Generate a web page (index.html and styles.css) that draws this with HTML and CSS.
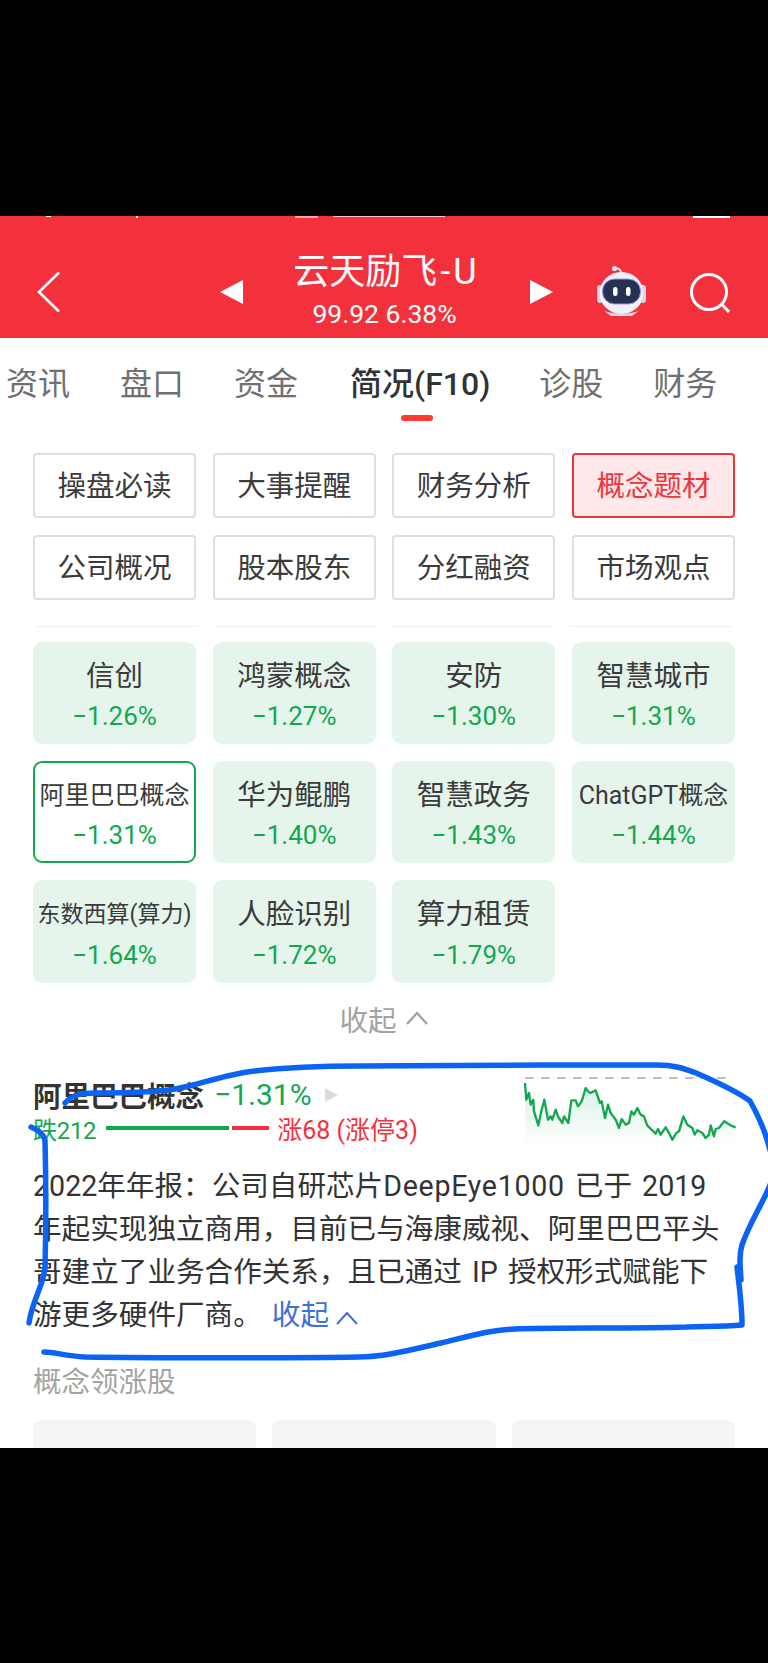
FILE: index.html
```html
<!DOCTYPE html>
<html lang="zh-CN">
<head>
    <meta charset="UTF-8">
    <meta name="viewport" content="width=device-width, initial-scale=1.0">
    <title>云天励飞-U</title>
    <link rel="stylesheet" href="styles.css">
</head>
<body>
    <div class="bar-black"></div>

    <div class="app">
        <header class="quote-header">
            <svg class="status-rest" width="768" height="4" viewBox="0 0 768 4">
                <rect x="46" y="0" width="5" height="1" fill="#fff"/>
                <rect x="136" y="0" width="2" height="2" fill="#fff"/>
                <rect x="295" y="0" width="23" height="2" rx="1" fill="#f9a9ae"/>
                <rect x="333" y="0" width="112" height="1" fill="#fbc4c7"/>
                <rect x="693" y="0" width="37" height="2" fill="#fff"/>
            </svg>
            <button class="icon-btn back-btn">
                <svg width="24" height="42" viewBox="0 0 24 42"><path d="M22 1.5 2 21l20 19.500" fill="none" stroke="#fff" stroke-width="2.600"/></svg>
            </button>
            <div class="stock-switch">
                <span class="arrow arrow-left"></span>
                <div class="stock-title">
                    <div class="stock-name">云天励飞<span class="stock-suffix">-U</span></div>
                    <div class="stock-price">99.92 6.38%</div>
                </div>
                <span class="arrow arrow-right"></span>
            </div>
            <div class="header-right">
                <svg class="robot" width="50" height="50" viewBox="0 0 50 50">
                    <path d="M25 9C24 4 23 3 19 2" fill="none" stroke="#e6e3f4" stroke-width="2"/>
                    <circle cx="17.500" cy="2.500" r="2.500" fill="#f1eff9"/>
                    <rect x="0" y="19" width="6" height="18" rx="3" fill="#d5d3e6"/>
                    <rect x="43" y="19" width="6" height="18" rx="3" fill="#d5d3e6"/>
                    <ellipse cx="24.500" cy="27" rx="22" ry="21" fill="#f2f1fa"/>
                    <path d="M6 44c8 5 29 5 37 0l-8 6H14z" fill="#dcdaec"/>
                    <rect x="5.500" y="13" width="38" height="25" rx="12" fill="#26304f" stroke="#a98fe6" stroke-width="1"/>
                    <rect x="16" y="21" width="4.500" height="9" rx="2.200" fill="#fff"/>
                    <rect x="29" y="21" width="4.500" height="9" rx="2.200" fill="#fff"/>
                </svg>
                <svg class="search" width="42" height="42" viewBox="0 0 42 42">
                    <circle cx="20" cy="20" r="17.500" fill="none" stroke="#fff" stroke-width="3"/>
                    <path d="M33 32.500 40 40" fill="none" stroke="#fff" stroke-width="3"/>
                </svg>
            </div>
        </header>

        <nav class="tabs">
            <span>资讯</span>
            <span>盘口</span>
            <span>资金</span>
            <span class="active">简况(F10)</span>
            <span>诊股</span>
            <span>财务</span>
        </nav>

        <div class="menu-grid">
            <a class="menu-item">操盘必读</a>
            <a class="menu-item">大事提醒</a>
            <a class="menu-item">财务分析</a>
            <a class="menu-item selected">概念题材</a>
            <a class="menu-item">公司概况</a>
            <a class="menu-item">股本股东</a>
            <a class="menu-item">分红融资</a>
            <a class="menu-item">市场观点</a>
        </div>

        <div class="peek-row">
            <i></i><i></i><i></i><i></i>
        </div>

        <div class="concept-grid">
            <div class="concept"><div class="concept-name">信创</div><div class="concept-pct">−1.26%</div></div>
            <div class="concept"><div class="concept-name">鸿蒙概念</div><div class="concept-pct">−1.27%</div></div>
            <div class="concept"><div class="concept-name">安防</div><div class="concept-pct">−1.30%</div></div>
            <div class="concept"><div class="concept-name">智慧城市</div><div class="concept-pct">−1.31%</div></div>
            <div class="concept current"><div class="concept-name small">阿里巴巴概念</div><div class="concept-pct">−1.31%</div></div>
            <div class="concept"><div class="concept-name">华为鲲鹏</div><div class="concept-pct">−1.40%</div></div>
            <div class="concept"><div class="concept-name">智慧政务</div><div class="concept-pct">−1.43%</div></div>
            <div class="concept"><div class="concept-name small">ChatGPT概念</div><div class="concept-pct">−1.44%</div></div>
            <div class="concept"><div class="concept-name smaller">东数西算(算力)</div><div class="concept-pct">−1.64%</div></div>
            <div class="concept"><div class="concept-name">人脸识别</div><div class="concept-pct">−1.72%</div></div>
            <div class="concept"><div class="concept-name">算力租赁</div><div class="concept-pct">−1.79%</div></div>
        </div>

        <div class="collapse-row">
            <span>收起</span>
            <svg width="24" height="14" viewBox="0 0 24 14"><path d="M2 13 12 2l10 11" fill="none" stroke="#a3a3a3" stroke-width="2.400"/></svg>
        </div>

        <section class="detail">
            <div class="summary">
                <div class="summary-left">
                    <div class="summary-title">
                        <b>阿里巴巴概念</b>
                        <span class="summary-pct">−1.31%</span>
                        <span class="tri"></span>
                    </div>
                    <div class="breadth">
                        <span class="down">跌212</span>
                        <span class="bar bar-down"></span>
                        <span class="bar bar-up"></span>
                        <span class="up">涨68 (涨停3)</span>
                    </div>
                </div>
                <!-- intraday line, coordinates are 3x the drawn size -->
                <svg class="spark" width="212" height="90" viewBox="70 40 636 270">
                    <defs>
                        <linearGradient id="sparkFill" x1="0" y1="0" x2="0" y2="1">
                            <stop offset="0" stop-color="#12a850" stop-opacity="0.16"/>
                            <stop offset="1" stop-color="#12a850" stop-opacity="0"/>
                        </linearGradient>
                    </defs>
                    <path d="M73 55H690" stroke="#aaa" stroke-width="4" stroke-dasharray="26 22" fill="none"/>
                    <polygon fill="url(#sparkFill)" points="73,70 77,120 85,100 90,135 98,120 100,155 113,197 122,155 131,120 142,180 150,170 155,180 165,150 172,170 185,190 190,170 203,190 212,122 225,122 232,140 243,125 255,85 262,95 270,100 285,92 298,130 303,125 313,175 322,135 330,160 345,180 355,205 363,178 375,195 385,190 392,155 400,165 410,145 420,165 430,170 440,198 455,212 465,222 472,208 480,225 495,203 505,220 515,240 527,220 535,215 548,170 560,195 575,205 582,225 590,212 605,220 615,235 625,225 630,197 640,230 645,208 655,205 670,185 690,197 705,203 705,262 73,262"/>
                    <polyline fill="none" stroke="#12a850" stroke-width="7" stroke-linejoin="round" points="73,70 77,120 85,100 90,135 98,120 100,155 113,197 122,155 131,120 142,180 150,170 155,180 165,150 172,170 185,190 190,170 203,190 212,122 225,122 232,140 243,125 255,85 262,95 270,100 285,92 298,130 303,125 313,175 322,135 330,160 345,180 355,205 363,178 375,195 385,190 392,155 400,165 410,145 420,165 430,170 440,198 455,212 465,222 472,208 480,225 495,203 505,220 515,240 527,220 535,215 548,170 560,195 575,205 582,225 590,212 605,220 615,235 625,225 630,197 640,230 645,208 655,205 670,185 690,197 705,203"/>
                </svg>
            </div>
            <p class="detail-text">2022年年报：公司自研芯片<span class="latin">DeepEye1000</span> 已于 2019 年起实现独立商用，目前已与海康威视、阿里巴巴平头哥建立了业务合作关系，且已通过 IP 授权形式赋能下游更多硬件厂商。 <a class="fold">收起<svg width="22" height="14" viewBox="0 0 22 14"><path d="M1 13 11 2l10 11" fill="none" stroke="#3f6fd9" stroke-width="2"/></svg></a></p>
            <h3 class="leader-title">概念领涨股</h3>
            <div class="leader-row">
                <div class="leader-card"></div>
                <div class="leader-card"></div>
                <div class="leader-card"></div>
            </div>
        </section>
    </div>

    <div class="bar-black bottom"></div>

    <!-- pen strokes scribbled on top of the page -->
    <svg class="pen" width="768" height="1663" viewBox="0 0 768 1663">
        <path d="M65 1103C72 1095 80 1093 95 1093C120 1093 150 1093 175 1089C200 1085 225 1074 255 1071C290 1067 320 1066 360 1066C430 1065 560 1065 657 1065C675 1065 685 1069 696 1073C712 1080 735 1090 750 1101C758 1115 765 1130 770 1150"/>
        <path d="M770 1185C762 1205 750 1222 742 1245C739 1255 740 1265 741 1280"/>
        <path d="M737 1267C739 1285 742 1305 742 1325C720 1327 700 1326 686 1327C630 1329 560 1327 515 1329C490 1330 470 1336 441 1343C410 1350 385 1357 358 1357C300 1358 150 1358 85 1357C65 1356 55 1352 44 1352"/>
        <path d="M31 1127C38 1130 44 1134 45 1140C46 1180 46 1230 45 1267C44 1285 32 1300 29 1323"/>
    </svg>
</body>
</html>
```

FILE: styles.css
```css
* {
    box-sizing: border-box;
}

body {
    position: relative;
    margin: 0;
    width: 768px;
    height: 1663px;
    overflow: hidden;
    background-color: #000;
    font-family: Roboto, "Noto Sans CJK SC", sans-serif;
}

.bar-black {
    height: 216px;
    background-color: #000;
}

.app {
    height: 1232px;
    overflow: hidden;
    background-color: #fff;
}

/* header */
.quote-header {
    position: relative;
    display: flex;
    align-items: center;
    height: 122px;
    padding-top: 30px;
    background-color: #f3313c;
    color: #fff;
}

.status-rest {
    position: absolute;
    top: 0;
    left: 0;
}

.icon-btn {
    padding: 0;
    border: 0;
    background: none;
}

.back-btn {
    display: flex;
    margin-left: 37px;
}

.stock-switch {
    display: flex;
    align-items: center;
    justify-content: space-between;
    width: 333px;
    margin-left: 159px;
}

.arrow {
    width: 0;
    height: 0;
    border-top: 12.500px solid transparent;
    border-bottom: 12.500px solid transparent;
}

.arrow-left {
    border-right: 23px solid #fff;
}

.arrow-right {
    border-left: 23px solid #fff;
}

.stock-title {
    text-align: center;
    margin-top: -2px;
}

.stock-name {
    font-size: 36px;
    line-height: 44px;
}

.stock-suffix {
    padding-left: 3px;
    letter-spacing: 3px;
}

.stock-price {
    padding-right: 4px;
    font-size: 26.500px;
    line-height: 39px;
}

.header-right {
    display: flex;
    align-items: center;
    margin-left: 44px;
    gap: 42px;
}

.robot {
    margin-top: -2px;
}

.search {
    margin-top: 2px;
}

/* tabs */
.tabs {
    display: flex;
    gap: 50px;
    height: 90px;
    padding: 0 0 4px 6px;
    align-items: center;
    font-size: 32px;
    color: #707070;
    white-space: nowrap;
}

.tabs .active {
    position: relative;
    font-weight: 500;
    color: #333;
    margin: 0 -1px 0 2px;
}

.tabs .active::after {
    content: "";
    position: absolute;
    left: 51px;
    bottom: -17px;
    width: 32px;
    height: 6px;
    border-radius: 3px;
    background-color: #fb3a30;
}

/* menu buttons */
.menu-grid {
    display: grid;
    grid-template-columns: repeat(4, 1fr);
    gap: 17px 16.500px;
    padding: 25px 33px 0;
}

.menu-item {
    display: flex;
    align-items: center;
    justify-content: center;
    height: 65px;
    padding-bottom: 4px;
    border: 2px solid #dfdfdf;
    border-radius: 4px;
    font-size: 28.500px;
    color: #3b3b3b;
}

.menu-item.selected {
    border-color: #f0343c;
    background-color: #fee8e9;
    color: #f0343c;
}

.peek-row {
    display: grid;
    grid-template-columns: repeat(4, 1fr);
    gap: 16.500px;
    margin-top: 26px;
    padding: 0 37px;
}

.peek-row i {
    height: 1px;
    background-color: #e3f3ea;
}

/* concept cards */
.concept-grid {
    display: grid;
    grid-template-columns: repeat(4, 1fr);
    grid-auto-rows: 102.500px;
    gap: 16.750px 16.500px;
    margin-top: 14.500px;
    padding: 0 33px;
}

.concept {
    padding-top: 15px;
    border-radius: 9px;
    background-color: #e6f5ec;
    text-align: center;
}

.concept.current {
    padding-top: 13px;
    border: 2px solid #12a850;
    background-color: #fff;
}

.concept-name {
    height: 40px;
    font-size: 28.500px;
    line-height: 40px;
    color: #3b3b3b;
    white-space: nowrap;
}

.concept-name.small {
    font-size: 25px;
}

.concept-name.smaller {
    font-size: 23px;
}

.concept-pct {
    margin-top: 2.500px;
    font-size: 26px;
    line-height: 34px;
    color: #12a850;
}

.collapse-row {
    display: flex;
    align-items: center;
    justify-content: center;
    gap: 8px;
    height: 40px;
    margin-top: 15.500px;
    font-size: 28.500px;
    color: #a3a3a3;
}

/* selected concept */
.detail {
    margin-top: 34.500px;
    padding: 0 33px;
}

.summary {
    display: flex;
    justify-content: space-between;
    height: 90px;
}

.summary-left {
    padding-top: 4px;
}

.summary-title {
    display: flex;
    align-items: center;
    height: 36px;
    font-size: 28.500px;
    color: #333;
}

.summary-pct {
    margin-left: 10px;
    font-size: 30px;
    color: #12a850;
}

.tri {
    width: 0;
    height: 0;
    margin-left: 13px;
    border-top: 7px solid transparent;
    border-bottom: 7px solid transparent;
    border-left: 13px solid #dcdcdc;
}

.breadth {
    display: flex;
    align-items: center;
    height: 31px;
    font-size: 24px;
}

.down {
    color: #12a850;
    letter-spacing: -0.300px;
}

.up {
    margin-left: 8px;
    font-size: 25px;
    color: #f5303c;
}

.bar {
    height: 4px;
}

.bar-down {
    width: 123px;
    margin-left: 10px;
    background-color: #12a850;
}

.bar-up {
    width: 37px;
    margin-left: 3px;
    background-color: #f5303c;
}

.spark {
    flex: none;
    margin-right: -1px;
}

.detail-text {
    max-width: 698px;
    margin: 2px 0 0;
    font-size: 28.600px;
    line-height: 43px;
    word-spacing: 3px;
    color: #333;
}

.latin {
    letter-spacing: 0.700px;
}

.fold {
    color: #3f6fd9;
}

.fold svg {
    margin-left: 7px;
}

.leader-title {
    margin: 26px 0 0;
    font-size: 28.500px;
    font-weight: 400;
    line-height: 40px;
    color: #a3a3a3;
}

.leader-row {
    display: grid;
    grid-template-columns: repeat(3, 1fr);
    gap: 16px;
    margin-top: 17px;
}

.leader-card {
    height: 80px;
    border-radius: 8px;
    background-color: #f5f5f5;
}

.pen {
    position: absolute;
    top: 0;
    left: 0;
    fill: none;
    stroke: #0a63f2;
    stroke-width: 5.500;
    stroke-linecap: round;
    stroke-linejoin: round;
}
```
